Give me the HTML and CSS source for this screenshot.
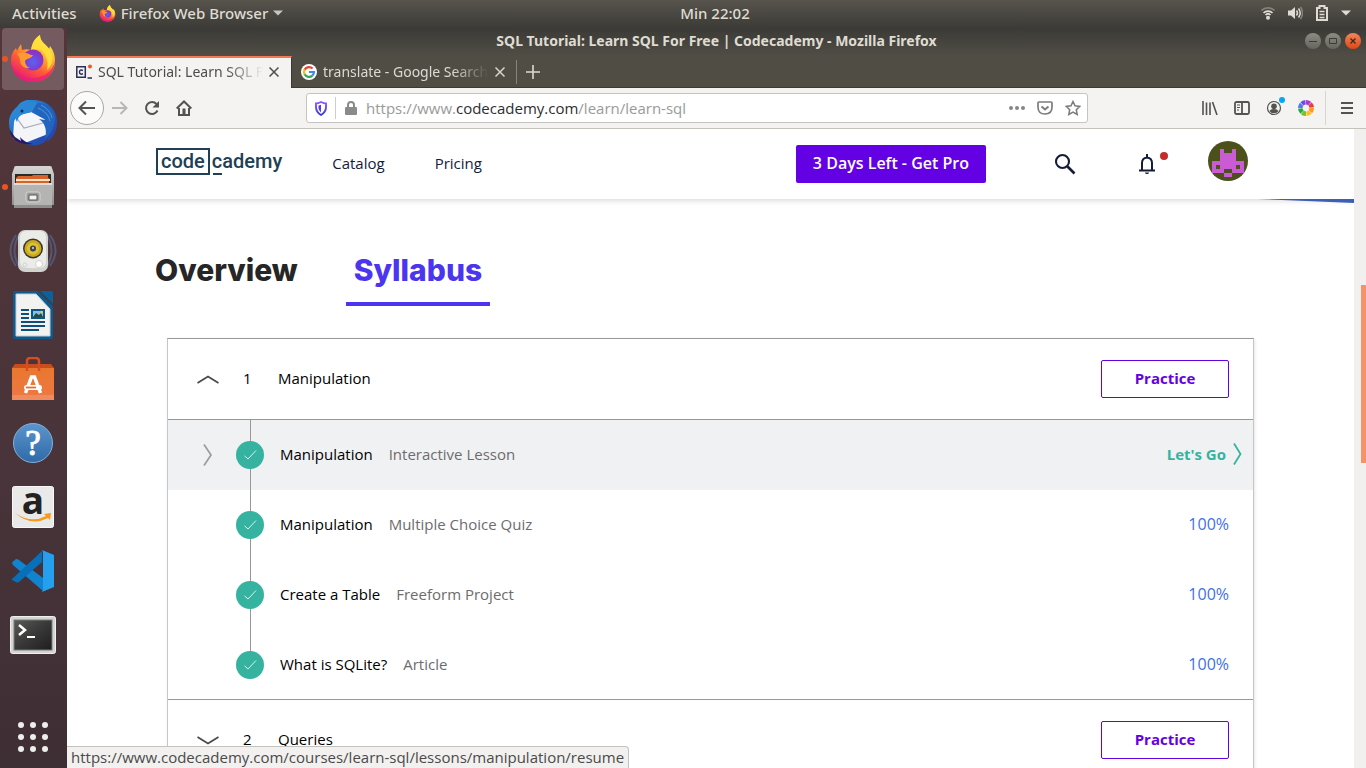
FILE: index.html
```html
<!DOCTYPE html>
<html lang="en">
<head>
<meta charset="utf-8">
<title>SQL Tutorial: Learn SQL For Free | Codecademy</title>
<link rel="stylesheet" href="styles.css">
</head>
<body>
<svg width="0" height="0" class="defs" aria-hidden="true">
  <defs>
    <linearGradient id="flame" x1=".85" y1=".05" x2=".3" y2="1"><stop offset="0" stop-color="#fff44f"/><stop offset=".35" stop-color="#ffb52e"/><stop offset=".65" stop-color="#ff5a36"/><stop offset="1" stop-color="#e6177c"/></linearGradient>
    <radialGradient id="globe" cx=".5" cy=".6" r=".6"><stop offset="0" stop-color="#5b63f0"/><stop offset=".6" stop-color="#7a3fd6"/><stop offset="1" stop-color="#9a2bb8"/></radialGradient>
    <linearGradient id="bird" x1="0" y1="0" x2="1" y2="1"><stop offset="0" stop-color="#3aa0e8"/><stop offset=".5" stop-color="#1a62c0"/><stop offset="1" stop-color="#2c3ca8"/></linearGradient>
    <linearGradient id="steel" x1="0" y1="0" x2="0" y2="1"><stop offset="0" stop-color="#d6d6d4"/><stop offset="1" stop-color="#8f8f8d"/></linearGradient>
    <linearGradient id="bag" x1="0" y1="0" x2="0" y2="1"><stop offset="0" stop-color="#e9772f"/><stop offset="1" stop-color="#ee7844"/></linearGradient>
    <linearGradient id="help" x1="0" y1="0" x2="0" y2="1"><stop offset="0" stop-color="#5a96cc"/><stop offset="1" stop-color="#3069a8"/></linearGradient>
    <linearGradient id="screen" x1="0" y1="0" x2="1" y2="1"><stop offset="0" stop-color="#5a5a58"/><stop offset=".5" stop-color="#383838"/><stop offset="1" stop-color="#1e1e1e"/></linearGradient>
    <linearGradient id="shield" x1="0" y1="0" x2="0" y2="1"><stop offset="0" stop-color="#9059ff"/><stop offset="1" stop-color="#3a3ad8"/></linearGradient>
    <symbol id="firefox" viewBox="0 0 46 48">
      <path d="M23 47C10 47 1 38 1 26c0-6 2-10 5-13l1 3c1-3 3-5 4-7l1 6c3-1 6-1 9 0 1-7 4-12 9-15 0 7 6 9 9 14l1-3c4 5 5 10 5 15 0 13-10 21-22 21z" fill="url(#flame)"/>
      <path d="M1 27c2 9 10 16 21 16 13 0 22-8 23-18 0 13-9 22-22 22C11 47 2 39 1 27z" fill="#e91e78" opacity=".75"/>
      <path d="M30 0c0 7 6 9 10 15 4 7 3 15-3 20 2-9-1-16-6-20-4-1-7-1-10 0 1-7 4-12 9-15z" fill="#ffe33c" opacity=".85"/>
      <circle cx="23" cy="25" r="10.500" fill="url(#globe)"/>
      <path d="M7 19c5-3 10-1 14 1h2c-2 4-6 3-8 6 0 3 2 6 5 7-6 1-10-3-10-8 0-2-1-4-3-6z" fill="#ff9a2e"/>
    </symbol>
    <symbol id="check" viewBox="0 0 28 28"><circle cx="14" cy="14" r="14" fill="#35b3a0"/><path d="M8.500 14.800 12 18l8-8.500" fill="none" stroke="#d8f3ee" stroke-width="1"/></symbol>
  </defs>
</svg>

<header class="topbar">
  <div class="topbar-left">
    <button class="top-btn">Activities</button>
    <button class="top-btn app-menu"><svg width="17" height="17"><use href="#firefox"/></svg>Firefox Web Browser<svg width="10" height="6" viewBox="0 0 10 6"><path d="M0 .5h10L5 5.500z" fill="#c8c6c0"/></svg></button>
  </div>
  <button class="top-btn clock">Min 22:02</button>
  <div class="topbar-right">
    <svg width="14" height="14" viewBox="0 0 14 14" fill="none" stroke-width="1.700"><path d="M.5 4.500C4 1 10 1 13.500 4.500" stroke="#84827c"/><path d="M2.500 7C5 4.500 9 4.500 11.500 7M4.500 9C6 7.500 8 7.500 9.500 9" stroke="#dfdbd2"/><circle cx="7" cy="11.700" r="2" fill="#dfdbd2"/></svg>
    <svg width="15" height="14" viewBox="0 0 15 14"><path d="M0 4.500h3L7 1v12L3 9.500H0z" fill="#dfdbd2"/><path d="M8.500 4.500q2 2.500 0 5M10.500 2.500q3.500 4.500 0 9" fill="none" stroke="#dfdbd2" stroke-width="1.500"/><path d="M12.500 1q4 6 0 12" fill="none" stroke="#84827c" stroke-width="1.500"/></svg>
    <svg width="12" height="16" viewBox="0 0 12 16" fill="none" stroke="#dfdbd2" stroke-width="2"><path d="M1 3h2.500V1h5v2H11v12H1z"/><path d="M3.500 6.500h5M3.500 9.500h5M3.500 12.500h5" stroke-width="1.500"/></svg>
    <svg width="10" height="6" viewBox="0 0 10 6"><path d="M0 .5h10L5 5.500z" fill="#dfdbd2"/></svg>
  </div>
</header>

<div class="desktop">
  <nav class="dock" aria-label="Dock">
    <button class="dock-item active running" aria-label="Firefox"><svg width="46" height="48"><use href="#firefox"/></svg></button>
    <button class="dock-item" aria-label="Thunderbird"><svg width="50" height="48" viewBox="0 0 50 48"><path d="M25 1c14 0 24 9 24 22 0 9-4 16-10 20l1-4c-3 5-9 8-16 7C9 45 1 36 1 24 1 17 4 12 9 8c3-5 8-7 11-7z" fill="url(#bird)"/><path d="m8 17 15-4 15 8 2 14-23 9-12-5 1-16z" fill="#f4f5f8"/><path d="m8 18 8 11 19-5" fill="none" stroke="#a9aab4" stroke-width="1.200"/><path d="M6 17C7 6 16 1 24 2c3 0 6 2 8 3-4 2-6 8-12 9-5 1-9 1-11 9z" fill="#2b87d4"/><path d="M29 4c10 0 17 7 18 15-1 11-5 17-10 21 2-8 1-15-6-20l6 1c-2-5-7-8-13-8z" fill="#2365be"/><path d="M33 6c6 3 10 8 11 13M30 9c7 3 11 8 12 13" stroke="#4f9bdf" fill="none"/><path d="m2 31 5 7 6 4-1-4c4 4 7 6 13 7-12 2-23-5-23-14z" fill="#27186a"/><circle cx="14" cy="12" r="1.500" fill="#0c2d63"/></svg></button>
    <button class="dock-item running" aria-label="Files"><svg width="44" height="46" viewBox="0 0 44 46"><path d="M5 2h34q2 0 2 2l2 6v31H1V10l2-6q0-2 2-2z" fill="url(#steel)"/><path d="M4 10h36v10H4z" fill="#2a2a28"/><path d="M6 13l1-1h14l1-1h15v3h1v6H5v-6z" fill="#d9622a"/><path d="M5 15h34v2H5z" fill="#ffe2bf"/><path d="M3 19h38v25H3z" fill="#b4b4b2"/><path d="M3 19h38v2H3z" fill="#dededc"/><path d="M3 41h38v3H3z" fill="#8d8d8b"/><rect x="15" y="28" width="14" height="10" rx="2" fill="#9d9d9b" stroke="#d6d6d4"/><path d="M18 31h8v5h-8z" fill="#f4f4f2" stroke="#565654"/></svg></button>
    <button class="dock-item" aria-label="Rhythmbox"><svg width="48" height="44" viewBox="0 0 48 44"><path d="M7 6Q-4 22 7 37M11 4Q0 22 11 39M41 6q11 16 0 31M37 4q11 18 0 35" fill="none" stroke="#5b6c96" stroke-width="2" opacity=".6"/><rect x="9" y="1" width="30" height="42" rx="7" fill="#d2d2ce"/><rect x="11" y="2" width="26" height="37" rx="6" fill="#ebebe8"/><circle cx="24" cy="19.500" r="10" fill="#353633"/><circle cx="24" cy="19.500" r="8.500" fill="#c9a81a"/><circle cx="24" cy="19.500" r="6" fill="#dcc036"/><circle cx="24" cy="19.500" r="3" fill="#3e4046"/><circle cx="24" cy="19" r="1.200" fill="#b8bcc0"/><circle cx="30" cy="35" r="3.500" fill="#fff" stroke="#cfcfcb"/><circle cx="16" cy="36" r="2" fill="none" stroke="#d2d2ce"/></svg></button>
    <button class="dock-item" aria-label="LibreOffice Writer"><svg width="40" height="48" viewBox="0 0 40 48"><path d="M2 0h23l15 15v31q0 2-2 2H2q-2 0-2-2V2q0-2 2-2z" fill="#0d5a8f"/><path d="M3 3h20l14 15v27H3z" fill="#f2f2f0" stroke="#c6cdd2"/><path d="M27 0h11q2 0 2 2v11z" fill="#0a629c"/><path d="M8 19h8M8 23h8M8 27h8M8 31h24M8 35h24M8 39h18" stroke="#0f4f79" stroke-width="2"/><path d="M18 18h14v10H18z" fill="#0e5587"/><path d="M20 20h10v6H20z" fill="#83c3e8"/><path d="m20 26 3-4 3 2 2-2 2 4z" fill="#254b43"/><circle cx="28.500" cy="21" r="1.200" fill="#f3c638"/></svg></button>
    <button class="dock-item" aria-label="Ubuntu Software"><svg width="42" height="44" viewBox="0 0 42 44"><path d="M3 7h36l3 4v32H0V11z" fill="#c84c1c"/><path d="M0 11h42v32H0z" fill="url(#bag)"/><path d="M0 38h42v5H0z" fill="#f08b5f"/><path d="M15 14V4q0-3 3-3h6q3 0 3 3v10" fill="none" stroke="#d94e20" stroke-width="2.500"/><path d="M13.500 36 19.500 20h3l6 16" fill="none" stroke="#fff" stroke-width="3.500"/><rect x="12" y="28" width="18" height="5" rx="2.500" fill="#fff"/><path d="M14 30.500h10" stroke="#e76c31" stroke-width="1.800"/></svg></button>
    <button class="dock-item" aria-label="Help"><svg width="42" height="42" viewBox="0 0 42 42"><circle cx="21" cy="21" r="19.500" fill="url(#help)" stroke="#86b0d8"/><text x="21" y="33" text-anchor="middle" class="glyph-help">?</text></svg></button>
    <button class="dock-item" aria-label="Amazon"><svg width="42" height="42" viewBox="0 0 42 42"><rect x=".5" y=".5" width="41" height="41" rx="2" fill="#e9e9e9" stroke="#f8f8f8"/><text x="21" y="28" text-anchor="middle" class="glyph-amazon">a</text><path d="M3 27q16 11 31 3l-2-2 7-1-1 7-2-2q-17 9-33-5z" fill="#f79a1c"/></svg></button>
    <button class="dock-item" aria-label="Visual Studio Code"><svg width="42" height="42" viewBox="0 0 42 42"><path d="M0 13q0-1 4-4 2 0 3 1l24 18v13L1 15z" fill="#1184cf"/><path d="M0 29 30 1v11L7 32q-2 1-3 0l-4-2z" fill="#0870b8"/><path d="m30 0 12 5v32l-12 5q1-1 1-3V3q0-2-1-3z" fill="#25a0ee"/></svg></button>
    <button class="dock-item" aria-label="Terminal"><svg width="46" height="38" viewBox="0 0 46 38"><rect x=".5" y=".5" width="45" height="37" rx="2" fill="#d4d4d2" stroke="#efefed"/><rect x="4" y="4" width="38" height="30" fill="url(#screen)" stroke="#7a7a78"/><path d="m9 9 6 5-6 5" fill="none" stroke="#fff" stroke-width="2.500"/><path d="M17 21h8" stroke="#fff" stroke-width="2"/></svg></button>
    <button class="dock-apps" aria-label="Show Applications"><svg width="30" height="30" viewBox="0 0 30 30" fill="#eeeeec"><circle cx="3" cy="3" r="3"/><circle cx="15" cy="3" r="3"/><circle cx="27" cy="3" r="3"/><circle cx="3" cy="15" r="3"/><circle cx="15" cy="15" r="3"/><circle cx="27" cy="15" r="3"/><circle cx="3" cy="27" r="3"/><circle cx="15" cy="27" r="3"/><circle cx="27" cy="27" r="3"/></svg></button>
  </nav>

  <div class="window">
    <div class="titlebar">
      <span class="window-title">SQL Tutorial: Learn SQL For Free | Codecademy - Mozilla Firefox</span>
      <div class="window-controls">
        <button class="wc" aria-label="Minimize"><svg width="16" height="16" viewBox="0 0 16 16"><path d="M4 8.500h8" stroke="#3c3b37"/></svg></button>
        <button class="wc" aria-label="Maximize"><svg width="16" height="16" viewBox="0 0 16 16"><path d="M4.500 5.500h7v5h-7z" fill="none" stroke="#3c3b37"/></svg></button>
        <button class="wc close" aria-label="Close"><svg width="16" height="16" viewBox="0 0 16 16"><path d="m5.500 5.500 5 5m0-5-5 5" stroke="#3c2a1c" stroke-width="1.400"/></svg></button>
      </div>
    </div>
    <div class="tabstrip">
      <div class="tab selected">
        <svg width="16" height="16" viewBox="0 0 16 16"><path d="M.8 2.800h8.500v10.500H.8z" fill="none" stroke="#2b2f55" stroke-width="1.500"/><path d="M7 6.500Q3.500 5 3.500 8T7 9.800" fill="none" stroke="#2b2f55" stroke-width="1.500"/><path d="M11.500 14H16" stroke="#2b2f55" stroke-width="1.500"/><circle cx="14" cy="2.500" r="2" fill="#f2571b"/></svg>
        <span class="tab-label">SQL Tutorial: Learn SQL For Free</span>
        <button class="tab-close" aria-label="Close tab"><svg width="10" height="10" viewBox="0 0 10 10"><path d="m.5.5 9 9m0-9-9 9" stroke="#4d4d4d" stroke-width="1.500"/></svg></button>
      </div>
      <div class="tab">
        <svg width="16" height="16" viewBox="0 0 16 16"><circle cx="8" cy="8" r="8" fill="#fff"/><g fill="none" stroke-width="2.200"><path d="M11.600 4.600A5 5 0 0 0 3.600 5.800" stroke="#ea4335"/><path d="M3.600 5.600a5 5 0 0 0 0 4.800" stroke="#fbbc05"/><path d="M3.600 10.300a5 5 0 0 0 7.800 1.300" stroke="#34a853"/><path d="M11.300 11.700A5 5 0 0 0 13 8H8" stroke="#4285f4"/></g></svg>
        <span class="tab-label">translate - Google Search</span>
        <button class="tab-close" aria-label="Close tab"><svg width="10" height="10" viewBox="0 0 10 10"><path d="m.5.5 9 9m0-9-9 9" stroke="#d6d4cd" stroke-width="1.500"/></svg></button>
      </div>
      <button class="new-tab" aria-label="New tab"><svg width="14" height="14" viewBox="0 0 14 14"><path d="M7 0v14M0 7h14" stroke="#dcdad3" stroke-width="1.600"/></svg></button>
    </div>
    <div class="toolbar">
      <button class="tool back" aria-label="Back"><svg width="18" height="16" viewBox="0 0 18 16"><path d="M17 8H2m6-6.500L1.500 8 8 14.500" fill="none" stroke="#55534f" stroke-width="2"/></svg></button>
      <button class="tool" aria-label="Forward"><svg width="16" height="14" viewBox="0 0 16 14"><path d="M0 7h14M8.500 1l6 6-6 6" fill="none" stroke="#b8b7b5" stroke-width="2"/></svg></button>
      <button class="tool" aria-label="Reload"><svg width="16" height="16" viewBox="0 0 16 16"><path d="M13.500 10.500A6 6 0 1 1 12.500 4" fill="none" stroke="#55534f" stroke-width="2"/><path d="M15 1v6.500H8.500z" fill="#55534f"/></svg></button>
      <button class="tool" aria-label="Home"><svg width="16" height="16" viewBox="0 0 16 16"><path d="m.7 8.500 7.300-7 7.300 7" fill="none" stroke="#55534f" stroke-width="2"/><path d="M3 8v7h10V8" fill="none" stroke="#55534f" stroke-width="2"/><path d="M6.500 8.500h3V14h-3z" fill="#55534f"/></svg></button>
      <div class="urlbar">
        <svg width="12" height="15" viewBox="0 0 12 15"><path d="M6 1q3 1.500 5 1.500V6q0 5-5 8Q1 11 1 6V2.500Q3 2.500 6 1z" fill="none" stroke="url(#shield)" stroke-width="1.900"/><path d="M6 3.700Q4.500 4.500 3.500 4.500V7q0 2.500 2.500 4.500z" fill="#4b40e0"/></svg>
        <span class="url-sep"></span>
        <svg width="12" height="14" viewBox="0 0 12 14"><path d="M3 7V4q0-3 3-3t3 3v3" fill="none" stroke="#8a8a88" stroke-width="2"/><rect y="6" width="12" height="8" rx="1" fill="#8a8a88"/></svg>
        <a class="url" href="#">https://www.<b>codecademy.com</b>/learn/learn-sql</a>
        <svg width="16" height="4" viewBox="0 0 16 4" fill="#868685"><circle cx="2" cy="2" r="2"/><circle cx="8" cy="2" r="2"/><circle cx="14" cy="2" r="2"/></svg>
        <svg width="16" height="14" viewBox="0 0 16 14" fill="none" stroke="#7d7c7a" stroke-width="1.700"><path d="M2 1h12q1 0 1 1v4q0 7-7 7T1 6V2q0-1 1-1z"/><path d="m4.500 5.500 3.500 3 3.500-3" stroke-width="2"/></svg>
        <svg width="16" height="16" viewBox="0 0 16 16"><path d="m8 1.500 2 4.300 4.800.6-3.500 3.300.9 4.800L8 12.200l-4.200 2.300.9-4.800L1.200 6.400 6 5.800z" fill="none" stroke="#7d7c7a" stroke-width="1.500"/></svg>
      </div>
      <button class="tool" aria-label="Library"><svg width="16" height="14" viewBox="0 0 16 14" stroke="#55534f" stroke-width="1.600"><path d="M1 0v14M4.500 1.500V14M8 1.500V14M10.500 1l4.500 13"/></svg></button>
      <button class="tool" aria-label="Sidebars"><svg width="16" height="14" viewBox="0 0 16 14" fill="none" stroke="#55534f" stroke-width="1.800"><rect x="1" y="1" width="14" height="12" rx="1.500"/><path d="M8 1v12"/><path d="M3 4h3M3 6.500h3M3 9h2" stroke-width="1"/></svg></button>
      <button class="tool badge" aria-label="Account"><svg width="16" height="16" viewBox="0 0 16 16"><circle cx="8" cy="8" r="6.500" fill="none" stroke="#55534f" stroke-width="1.200"/><circle cx="8" cy="6.200" r="2.800" fill="#55534f"/><path d="M3.500 11q1-2 4.500-2t4.500 2Q11 13.300 8 13.300T3.500 11z" fill="#55534f"/></svg></button>
      <button class="tool" aria-label="Colour picker"><svg width="16" height="16" viewBox="0 0 16 16" fill="none" stroke-width="4.600"><g stroke-dasharray="3.900 36"><circle cx="8" cy="8" r="5.700" stroke="#ff9a1c"/><circle cx="8" cy="8" r="5.700" stroke="#ffbe18" transform="rotate(45 8 8)"/><circle cx="8" cy="8" r="5.700" stroke="#7cc02c" transform="rotate(90 8 8)"/><circle cx="8" cy="8" r="5.700" stroke="#25a84c" transform="rotate(135 8 8)"/><circle cx="8" cy="8" r="5.700" stroke="#4f7cf2" transform="rotate(180 8 8)"/><circle cx="8" cy="8" r="5.700" stroke="#6a4ce8" transform="rotate(225 8 8)"/><circle cx="8" cy="8" r="5.700" stroke="#b03ad0" transform="rotate(270 8 8)"/><circle cx="8" cy="8" r="5.700" stroke="#ee3a48" transform="rotate(315 8 8)"/></g></svg></button>
      <span class="tool-sep"></span>
      <button class="tool menu" aria-label="Menu"><svg width="12" height="12" viewBox="0 0 12 12"><path d="M0 1h12M0 6h12M0 11h12" stroke="#55534f" stroke-width="2"/></svg></button>
    </div>

    <div class="viewport">
      <div class="page">
        <header class="site-header">
          <a class="logo" href="#" aria-label="Codecademy"><span class="logo-box">code</span><span class="logo-c">c</span><span>ademy</span></a>
          <nav class="site-nav"><a href="#">Catalog</a><a href="#">Pricing</a></nav>
          <button class="pro">3 Days Left - Get Pro</button>
          <button class="head-icon search" aria-label="Search"><svg width="22" height="22" viewBox="0 0 22 22" fill="none" stroke="#141c3a" stroke-width="2.100"><circle cx="8.500" cy="8.500" r="6.500"/><path d="m13.500 13.500 7 7" stroke-width="2.600"/></svg></button>
          <button class="head-icon bell" aria-label="Notifications"><svg width="16" height="20" viewBox="0 0 16 20"><path d="M3 16V9q0-5 5-5.500Q13 4 13 9v7M0 16.500h16" fill="none" stroke="#141c3a" stroke-width="2"/><path d="M7 0h2v3H7zM6 18.500h4q0 1.500-2 1.500t-2-1.500z" fill="#141c3a"/></svg></button>
          <button class="avatar" aria-label="Profile"><svg width="40" height="40" viewBox="0 0 40 40" shape-rendering="crispEdges"><path fill="#cb5bd4" d="M12 8h4v4h8V8h4v12h8v12h-8v-4H12v4H4V20h8zM16 32h8v4h-8z"/><path fill="#cb5bd4" d="M12 28h4v4h-4zM24 28h4v4h-4z"/><path fill="#4c511c" d="M8 24h4v4H8zM28 24h4v4h-4z"/></svg></button>
        </header>
        <svg class="wedge" viewBox="0 0 96 4" preserveAspectRatio="none"><path d="M0 0h96v4z" fill="#3b60b8"/></svg>
        <main class="content">
          <nav class="tabs"><a href="#">Overview</a><a class="current" href="#">Syllabus</a></nav>
          <section class="syllabus">
            <div class="module">
              <button class="toggle" aria-label="Collapse"><svg width="22" height="9" viewBox="0 0 22 9"><path d="m.5 8 10.500-6.500L21.500 8" fill="none" stroke="#4a4a4e" stroke-width="1.800"/></svg></button>
              <span class="num">1</span><h2>Manipulation</h2><button class="practice">Practice</button>
            </div>
            <ul class="lessons">
              <li class="hover"><svg class="arrow" width="22" height="22" viewBox="0 0 22 22"><path d="m7 .5 7 10.500-7 10.500" fill="none" stroke="#9c9c9f" stroke-width="1.700"/></svg><svg class="check"><use href="#check"/></svg><a href="#">Manipulation</a><span class="kind">Interactive Lesson</span><a class="go" href="#">Let's Go<svg width="9" height="22" viewBox="0 0 9 22"><path d="m1 .5 6.500 10.500L1 21.500" fill="none" stroke="#35b3a0" stroke-width="1.800"/></svg></a></li>
              <li><span class="arrow"></span><svg class="check"><use href="#check"/></svg><a href="#">Manipulation</a><span class="kind">Multiple Choice Quiz</span><span class="score">100%</span></li>
              <li><span class="arrow"></span><svg class="check"><use href="#check"/></svg><a href="#">Create a Table</a><span class="kind">Freeform Project</span><span class="score">100%</span></li>
              <li><span class="arrow"></span><svg class="check"><use href="#check"/></svg><a href="#">What is SQLite?</a><span class="kind">Article</span><span class="score">100%</span></li>
            </ul>
            <div class="module">
              <button class="toggle" aria-label="Expand"><svg width="22" height="9" viewBox="0 0 22 9"><path d="M.5 1 11 7.500 21.500 1" fill="none" stroke="#4a4a4e" stroke-width="1.800"/></svg></button>
              <span class="num">2</span><h2>Queries</h2><button class="practice">Practice</button>
            </div>
          </section>
        </main>
      </div>
      <div class="scrollbar"><div class="thumb"></div></div>
      <div class="status">https://www.codecademy.com/courses/learn-sql/lessons/manipulation/resume</div>
    </div>
  </div>
</div>
</body>
</html>
```
FILE: styles.css
```css
* { box-sizing: border-box; }
body {
  margin: 0;
  height: 100vh;
  display: flex;
  flex-direction: column;
  overflow: hidden;
  font: 14px/20px "Noto Sans", "Open Sans", sans-serif;
  background: #fff;
}
button { font: inherit; color: inherit; border: 0; padding: 0; background: none; }
a { color: inherit; text-decoration: none; }
svg { display: block; flex: none; }
.defs { position: absolute; }

/* Desktop panel */
.topbar {
  flex: none;
  height: 28px;
  display: grid;
  grid-template-columns: 1fr auto 1fr;
  align-items: center;
  padding: 0 15px 2px 12px;
  background: linear-gradient(#57544c, #3c3b37);
  color: #dfdbd2;
  font-size: 15px;
  font-weight: 500;
}
.topbar-left, .topbar-right, .app-menu { display: flex; align-items: center; }
.topbar-left { gap: 22px; }
.app-menu { gap: 5px; white-space: nowrap; }
.clock { margin-left: 67px; }
.topbar-right { justify-content: flex-end; gap: 13px; }

.desktop { flex: 1; min-height: 0; display: flex; }

/* Dock */
.dock {
  flex: none;
  width: 67px;
  display: flex;
  flex-direction: column;
  gap: 2px;
  padding-left: 2px;
  background: linear-gradient(#53363a, #48343a 60%, #3e2f34);
}
.dock-item, .dock-apps {
  flex: none;
  position: relative;
  width: 62px;
  height: 62px;
  display: flex;
  align-items: center;
  justify-content: center;
}
.dock-item.active { background: #745b5f; border-radius: 4px; }
.dock-item.running::before {
  content: "";
  position: absolute;
  left: 0;
  width: 6px;
  height: 6px;
  border-radius: 50%;
  background: #e95420;
}
.dock-apps { margin-top: auto; }
.glyph-help { font: 35px "Liberation Serif", serif; fill: #fff; stroke: #fff; }
.glyph-amazon { font: bold 37px "Open Sans", sans-serif; fill: #222; }

/* Browser window */
.window { flex: 1; min-width: 0; display: flex; flex-direction: column; }
.titlebar {
  flex: none;
  position: relative;
  height: 28px;
  display: flex;
  align-items: center;
  justify-content: center;
  padding-bottom: 2px;
  background: linear-gradient(#3b3a36, #504d45);
  color: #dfdbd2;
  font-weight: 700;
}
.window-controls { position: absolute; right: 5px; top: 5px; display: flex; gap: 4px; }
.wc { width: 16px; height: 16px; border-radius: 50%; background: linear-gradient(#8e8b84, #66645e); }
.wc.close { background: linear-gradient(#f4845c, #dd4814); }
.tabstrip {
  flex: none;
  height: 32px;
  display: flex;
  background: #504d45;
  box-shadow: inset 0 -1px #3b3a36;
  color: #dcdad3;
}
.tab {
  width: 225px;
  display: flex;
  align-items: center;
  gap: 6px;
  padding: 0 12px 0 9px;
}
.tab + .tab { background: linear-gradient(#87847c, #87847c) right center / 1px 24px no-repeat; }
.tab.selected {
  background: #f4f3f1;
  border-top: 2px solid #f27b53;
  border-right: 1px solid #3b3a36;
  padding-bottom: 2px;
  color: #4d4d4d;
}
.tab-label {
  flex: 1;
  min-width: 0;
  overflow: hidden;
  white-space: nowrap;
  mask-image: linear-gradient(90deg, #000 78%, transparent);
}
.new-tab { padding: 0 9px; }
.toolbar {
  flex: none;
  height: 41px;
  display: flex;
  align-items: center;
  padding: 0 3px;
  background: #f4f3f1;
  border-bottom: 1px solid #c5c2be;
}
.tool { width: 32px; height: 32px; display: flex; align-items: center; justify-content: center; position: relative; }
.back { width: 34px; height: 34px; border-radius: 50%; border: 1px solid #a9a7a4; background: #fbfbfa; }
.badge::after {
  content: "";
  position: absolute;
  right: 5px;
  top: 5px;
  width: 6px;
  height: 6px;
  border-radius: 50%;
  background: #00a8f8;
}
.tool-sep { width: 1px; height: 34px; margin: 0 5px 0 3px; background: #d8d6d3; }
.urlbar {
  flex: 1;
  min-width: 0;
  height: 30px;
  margin: 0 106px;
  padding: 0 6px 0 8px;
  display: flex;
  align-items: center;
  gap: 9px;
  background: #fff;
  border: 1px solid #c6c3c0;
  border-radius: 3px;
}
.url-sep { width: 1px; height: 22px; background: #cfcdca; margin-left: -1px; }
.url { flex: 1; min-width: 0; overflow: hidden; white-space: nowrap; font: 15px/20px "Open Sans", sans-serif; color: #9a9a9a; }
.url b { font-weight: 400; color: #2e2e2e; }
.urlbar .url ~ svg { margin-left: 3px; }

/* Page */
.viewport { flex: 1; min-height: 0; position: relative; display: flex; overflow: hidden; }
.page {
  flex: 1;
  min-width: 0;
  position: relative;
  overflow: hidden;
  background: #fff;
  font: 15px/24px "Open Sans", "Noto Sans", sans-serif;
  color: #000;
}
.site-header {
  height: 70px;
  display: flex;
  align-items: center;
  padding: 0 106px 0 89px;
  box-shadow: 0 2px 5px rgba(0, 0, 0, .14);
  color: #141c3a;
}
.logo { display: flex; font: 500 20px/22px Roboto, sans-serif; color: #204056; padding-bottom: 5px; }
.logo > span { padding: 2px 0 0; }
.logo .logo-box { border: 2px solid #204056; padding: 0 3px 1px; margin-right: 2px; }
.logo .logo-c { background: linear-gradient(#204056, #204056) 1px 100% / 9px 2px no-repeat; }
.site-nav { display: flex; gap: 50px; margin-left: 50px; padding-bottom: 2px; }
.pro {
  margin-left: auto;
  height: 38px;
  padding: 0 17px 2px;
  border-radius: 2px;
  background: #6400e4;
  color: #fff;
  font-size: 16px;
  font-weight: 600;
}
.head-icon { position: relative; width: 42px; height: 42px; display: flex; align-items: center; justify-content: center; margin-right: 40px; }
.search { margin-left: 58px; }
.bell::after {
  content: "";
  position: absolute;
  right: 0;
  top: 9px;
  width: 8px;
  height: 8px;
  border-radius: 50%;
  background: #c22c2c;
}
.avatar { width: 40px; height: 40px; margin-bottom: 6px; border-radius: 50%; overflow: hidden; background: #4c511c; }
.wedge { position: absolute; right: 0; top: 70px; width: 96px; height: 4px; }
.content { padding: 42px 100px 0; }
.tabs { display: flex; gap: 40px; margin-left: -20px; font: 800 30px/40px Inter, sans-serif; color: #262626; }
.tabs a { padding: 9px 8px 12px; border-bottom: 4px solid transparent; }
.tabs .current { color: #4b35ef; border-color: #4b35ef; }
.syllabus {
  margin-top: 32px;
  border: 1px solid #c6c6c8;
  border-top-color: #98989b;
  box-shadow: 1px 1px 3px rgba(0, 0, 0, .1);
}
.module { height: 80px; display: flex; align-items: center; padding: 0 24px 0 29px; }
.num { width: 35px; margin-left: 24px; }
h2 { margin: 0; font: inherit; }
.practice {
  width: 128px;
  height: 38px;
  margin-left: auto;
  padding-bottom: 2px;
  border: 1px solid #6400e4;
  border-radius: 2px;
  background: #fff;
  color: #6400e4;
  font-weight: 700;
}
.num, h2, .lessons a, .kind, .score { padding-bottom: 2px; }
.lessons { margin: 0; padding: 0; list-style: none; border: solid #98989b; border-width: 1px 0; }
.lessons li {
  height: 70px;
  display: flex;
  align-items: center;
  gap: 16px;
  padding: 0 24px 0 29px;
  background: linear-gradient(#98989b, #98989b) 82px 0 / 1px 100% no-repeat;
}
.lessons li:last-child { height: 69px; background-size: 1px 50%; }
.lessons .hover { background-color: #f0f1f3; padding-right: 11px; }
.arrow { width: 22px; }
.check { width: 28px; height: 28px; margin-left: 1px; }
.kind { color: #6c6c6e; }
.score { margin-left: auto; color: #3f6fe8; font-size: 16px; }
.go { margin-left: auto; display: flex; align-items: center; gap: 7px; color: #35b3a0; font-weight: 700; }
.scrollbar { flex: none; width: 12px; padding-left: 7px; background: #f1f0ee; }
.scrollbar::before { content: ""; display: block; height: 24.4%; }
.thumb { height: 27.9%; background: #f4926a; }
.status {
  position: absolute;
  left: 0;
  bottom: 0;
  height: 22px;
  padding: 0 4px;
  background: #f2f1ef;
  border: solid #c4c2bf;
  border-width: 1px 1px 0 0;
  border-top-right-radius: 4px;
  color: #4a4a4a;
  font: 15px/20px "Open Sans", sans-serif;
  white-space: nowrap;
}
```
